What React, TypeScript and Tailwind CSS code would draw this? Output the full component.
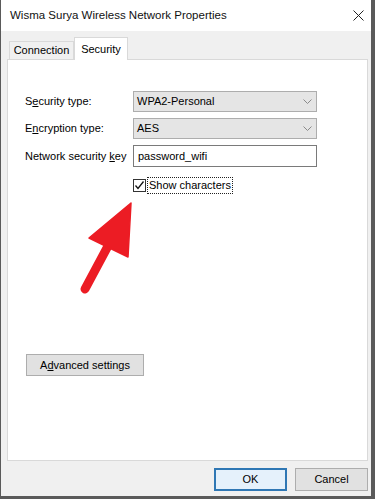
import React from 'react';

const font = { fontFamily: '"Liberation Sans", Arial, sans-serif' };

const Chevron: React.FC = () => (
  <svg width="9" height="5" viewBox="0 0 9 5" className="mr-[4px]">
    <polyline points="0.5,0.5 4.5,4.5 8.5,0.5" fill="none" stroke="#8a8a8a" strokeWidth="1" />
  </svg>
);

const Combo: React.FC<{ value: string }> = ({ value }) => (
  <div className="w-[184px] h-[21px] bg-[#e5e5e5] border border-[#adadad] flex items-center justify-between pl-[3px]">
    <span>{value}</span>
    <Chevron />
  </div>
);

const App: React.FC = () => {
  return (
    <div className="relative w-[375px] h-[499px] bg-[#5a5a5a] overflow-hidden text-[11px] text-black" style={font}>
      <div className="ml-px w-[370px] h-[496px] flex flex-col bg-[#f0f0f0]">
        {/* Title bar */}
        <div className="h-[31px] bg-white flex items-center justify-between pl-[9px] pr-[6px] shrink-0">
          <span className="text-[11.5px] text-[#111]">Wisma Surya Wireless Network Properties</span>
          <svg width="11" height="11" viewBox="0 0 11 11" className="mr-[1px]">
            <path d="M0.5 0.5 L10.5 10.5 M10.5 0.5 L0.5 10.5" stroke="#222" strokeWidth="1" />
          </svg>
        </div>

        {/* Tabs */}
        <div className="flex items-end pl-[7px] pt-[6px] shrink-0">
          <div className="ml-px w-[65px] h-[18px] border border-b-0 border-[#d9d9d9] bg-[#f0f0f0] flex items-center justify-center">
            Connection
          </div>
          <div className="relative z-10 -mb-px w-[54px] h-[23px] border border-b-0 border-[#d9d9d9] bg-white flex items-start justify-center pt-[3px]">
            Security
          </div>
        </div>

        {/* Panel */}
        <div className="mx-[6px] ml-[6px] mr-[3px] h-[402px] bg-white border border-[#d9d9d9] pl-[17px] pt-[31px] shrink-0">
          <div className="flex items-center">
            <span className="w-[108px]">
              S<span className="underline">e</span>curity type:
            </span>
            <Combo value="WPA2-Personal" />
          </div>
          <div className="flex items-center mt-[6px]">
            <span className="w-[108px]">
              E<span className="underline">n</span>cryption type:
            </span>
            <Combo value="AES" />
          </div>
          <div className="flex items-center mt-[6px]">
            <span className="w-[108px]">
              Network security <span className="underline">k</span>ey
            </span>
            <div className="w-[184px] h-[22px] bg-white border border-[#7a7a7a] flex items-center pl-[4px]">
              password_wifi
            </div>
          </div>
          <div className="flex items-center mt-[10px] ml-[108px]">
            <div className="w-[13px] h-[13px] border border-[#333] bg-white flex items-center justify-center">
              <svg width="11" height="11" viewBox="0 0 11 11">
                <polyline points="1.5,5.5 4,8.5 9.5,1.5" fill="none" stroke="#111" strokeWidth="1.3" />
              </svg>
            </div>
            <span className="ml-px h-[17px] px-px border border-dotted border-[#222] flex items-center">
              Show characters
            </span>
          </div>

          <div className="mt-[160px] ml-px w-[118px] h-[22px] bg-[#e1e1e1] border border-[#adadad] flex items-center justify-center">
            A<span className="underline">d</span>vanced settings
          </div>
        </div>

        {/* Footer */}
        <div className="flex justify-end gap-[8px] pr-[3px] pt-[7px]">
          <div className="w-[73px] h-[23px] bg-[#e5f1fb] border-2 border-[#2f77b4] flex items-center justify-center">
            OK
          </div>
          <div className="w-[73px] h-[23px] bg-[#e1e1e1] border border-[#adadad] flex items-center justify-center">
            Cancel
          </div>
        </div>
      </div>

      {/* Red arrow annotation */}
      <svg className="absolute left-0 top-0 pointer-events-none" width="375" height="499" viewBox="0 0 375 499">
        <line x1="108" y1="246" x2="85" y2="289" stroke="#ec1c24" strokeWidth="9" strokeLinecap="round" />
        <polygon points="131,203 89,238 128,257" fill="#ec1c24" stroke="#ec1c24" strokeWidth="1.5" strokeLinejoin="round" />
      </svg>
    </div>
  );
};

export default App;
